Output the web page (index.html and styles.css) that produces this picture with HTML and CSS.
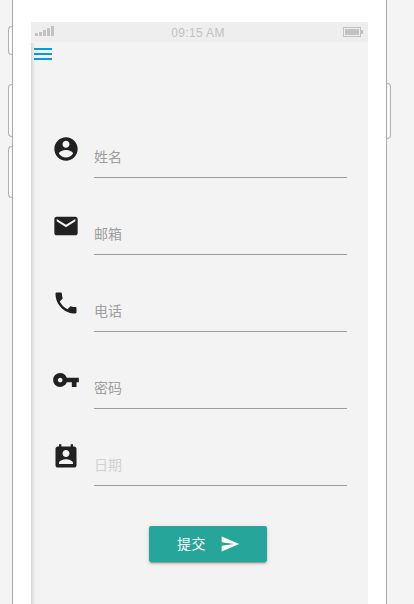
FILE: index.html
```
<!DOCTYPE html>
<html lang="zh-CN">
<head>
    <meta charset="utf-8">
    <meta name="viewport" content="width=device-width, initial-scale=1.0">
    <title>提交</title>
    <link rel="stylesheet" href="styles.css">
</head>
<body>
<div class="phone">
    <i class="side_key mute"></i>
    <i class="side_key volume_up"></i>
    <i class="side_key volume_down"></i>
    <i class="side_key power"></i>
    <div class="screen">
        <div class="status_bar">
            <div class="signal"><i></i><i></i><i></i><i></i><i></i></div>
            <span class="time">09:15 AM</span>
            <div class="battery"></div>
        </div>
        <div class="page">
            <button type="button" class="btn_menu" aria-label="menu"><i></i><i></i><i></i></button>
            <form class="form">
                <div class="row">
                    <svg class="icon" viewBox="0 0 24 24"><path d="M12 2C6.480 2 2 6.480 2 12s4.480 10 10 10 10-4.480 10-10S17.520 2 12 2zm0 3c1.660 0 3 1.340 3 3s-1.340 3-3 3-3-1.340-3-3 1.340-3 3-3zm0 14.200c-2.500 0-4.710-1.280-6-3.220.030-1.990 4-3.080 6-3.080 1.990 0 5.970 1.090 6 3.080-1.290 1.940-3.500 3.220-6 3.220z"/></svg>
                    <input type="text" placeholder="姓名">
                </div>
                <div class="row">
                    <svg class="icon" viewBox="0 0 24 24"><path d="M20 4H4c-1.100 0-1.990.900-1.990 2L2 18c0 1.100.900 2 2 2h16c1.100 0 2-.900 2-2V6c0-1.100-.900-2-2-2zm0 4l-8 5-8-5V6l8 5 8-5v2z"/></svg>
                    <input type="text" placeholder="邮箱">
                </div>
                <div class="row">
                    <svg class="icon" viewBox="0 0 24 24"><path d="M6.620 10.790c1.440 2.830 3.760 5.140 6.590 6.590l2.200-2.200c.270-.270.670-.360 1.020-.240 1.120.370 2.330.570 3.570.570.550 0 1 .450 1 1V20c0 .550-.450 1-1 1-9.390 0-17-7.610-17-17 0-.550.450-1 1-1h3.500c.550 0 1 .450 1 1 0 1.250.200 2.450.570 3.570.110.350.030.740-.250 1.020l-2.200 2.200z"/></svg>
                    <input type="text" placeholder="电话">
                </div>
                <div class="row">
                    <svg class="icon" viewBox="0 0 24 24"><path d="M12.650 10C11.830 7.670 9.610 6 7 6c-3.310 0-6 2.690-6 6s2.690 6 6 6c2.610 0 4.830-1.670 5.650-4H17v4h4v-4h2v-4H12.650zM7 14c-1.100 0-2-.900-2-2s.900-2 2-2 2 .900 2 2-.900 2-2 2z"/></svg>
                    <input type="password" placeholder="密码">
                </div>
                <div class="row date">
                    <svg class="icon" viewBox="0 0 24 24"><path d="M19 3h-1V1h-2v2H8V1H6v2H5c-1.110 0-2 .900-2 2v14c0 1.100.890 2 2 2h14c1.100 0 2-.900 2-2V5c0-1.100-.900-2-2-2zm-7 3c1.660 0 3 1.340 3 3s-1.340 3-3 3-3-1.340-3-3 1.340-3 3-3zm6 12H6v-1c0-2 4-3.100 6-3.100s6 1.100 6 3.100v1z"/></svg>
                    <input type="text" placeholder="日期">
                </div>
                <button type="button" class="btn_submit">
                    <span>提交</span>
                    <svg class="send" viewBox="0 0 24 24"><path d="M2.010 21L23 12 2.010 3 2 10l15 2-15 2z"/></svg>
                </button>
            </form>
        </div>
    </div>
</div>
</body>
</html>
```
FILE: styles.css
```
* {
    box-sizing: border-box;
}

body {
    margin: 0;
    height: 604px;
    overflow: hidden;
    background-color: #f4f4f4;
    font-family: "Liberation Sans", "Noto Sans CJK SC", sans-serif;
}

.phone {
    position: relative;
    width: 375px;
    height: 604px;
    margin-left: 12px;
    padding: 22px 18px 0;
    border: solid #aaa;
    border-width: 0 1px;
    background-color: #fff;
}

/* hardware keys on the phone edges */
.side_key {
    position: absolute;
    left: -5px;
    width: 4px;
    border: 1px solid #b0b0b0;
    border-right: 0;
    border-radius: 4px 0 0 4px;
    background-color: #fafafa;
}

.side_key.mute {
    top: 26px;
    height: 29px;
}

.side_key.volume_up {
    top: 84px;
    height: 53px;
}

.side_key.volume_down {
    top: 146px;
    height: 52px;
}

.side_key.power {
    top: 83px;
    left: auto;
    right: -5px;
    height: 56px;
    border: 1px solid #b0b0b0;
    border-left: 0;
    border-radius: 0 4px 4px 0;
}

.screen {
    height: 582px;
    background-color: #f3f3f3;
}

.status_bar {
    display: flex;
    justify-content: space-between;
    height: 20px;
    padding: 4px 5px 0 4px;
    background-color: #eee;
}

.signal {
    display: flex;
    align-items: flex-end;
    gap: 1px;
    width: 18px;
    height: 10px;
}

.signal i {
    flex: none;
    width: 3px;
    height: 3px;
    background-color: #c3c2be;
}

.signal i:nth-child(2) {
    height: 4px;
}

.signal i:nth-child(3) {
    height: 6px;
}

.signal i:nth-child(4) {
    height: 8px;
}

.signal i:nth-child(5) {
    height: 10px;
}

.time {
    color: #c3c2be;
    font-size: 12px;
    line-height: 14px;
    letter-spacing: 0.35px;
}

.battery {
    position: relative;
    width: 18px;
    height: 10px;
    margin: 1px 2px 0 0;
    padding: 1px;
    border: 1px solid #c3c2be;
    background-color: #c3c2be;
    background-clip: content-box;
}

.battery::after {
    content: "";
    position: absolute;
    top: 2px;
    right: -3px;
    width: 2px;
    height: 4px;
    background-color: #c3c2be;
}

.page {
    height: 562px;
    padding-top: 6px;
    background: linear-gradient(to right, #d2d2d2, #e6e6e6 2px, #f3f3f3 5px) no-repeat 0 1px;
}

.btn_menu {
    display: flex;
    flex-direction: column;
    gap: 3px;
    width: 18px;
    margin-left: 3px;
    padding: 0;
    border: 0;
    background: none;
}

.btn_menu i {
    width: 18px;
    height: 2px;
    background-color: #039be5;
}

.form {
    display: flex;
    flex-direction: column;
    padding: 76px 21px 0;
}

.row {
    display: flex;
    align-items: flex-start;
    height: 42px;
    margin-bottom: 35px;
}

.icon {
    flex: none;
    width: 28px;
    height: 28px;
    margin: -1px 14px 0 0;
    fill: #212121;
}

.row input {
    flex: 1;
    min-width: 0;
    height: 42px;
    padding: 1px 0 0;
    border: 0;
    border-bottom: 1px solid #9e9e9e;
    outline: none;
    background: none;
    font-family: inherit;
    font-size: 14px;
}

.row input::placeholder {
    color: #9e9e9e;
    opacity: 1;
}

.row.date input::placeholder {
    color: #d1d1d1;
}

.btn_submit {
    display: flex;
    align-items: center;
    width: 118px;
    height: 36px;
    margin: 5px 0 0 97px;
    padding: 0 0 0 28px;
    border: 0;
    border-radius: 2px;
    background-color: #26a69a;
    box-shadow: 0 2px 2px 0 rgba(0, 0, 0, 0.14), 0 1px 5px 0 rgba(0, 0, 0, 0.12), 0 3px 1px -2px rgba(0, 0, 0, 0.2);
    color: #fff;
    font-family: inherit;
    font-size: 14px;
    letter-spacing: 0.5px;
}

.btn_submit span {
    margin-top: -2px;
}

.send {
    width: 20px;
    height: 20px;
    margin-left: 14px;
    fill: #fff;
}
```
